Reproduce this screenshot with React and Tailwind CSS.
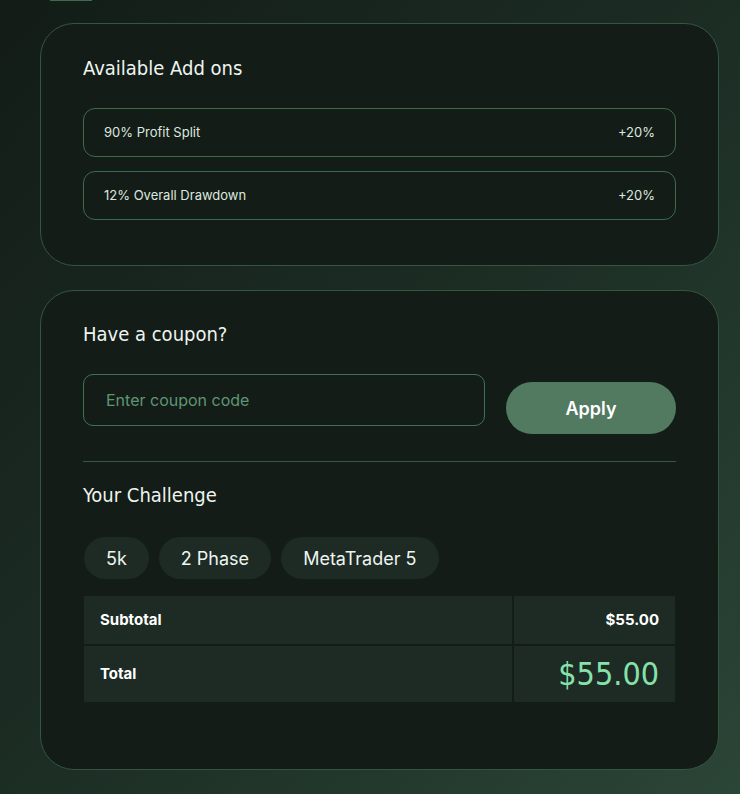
import React from 'react';

const display = { fontFamily: '"Liberation Sans Narrow", "DejaVu Sans Condensed", "Roboto", sans-serif' };
const body = { fontFamily: 'Inter, "Noto Sans", sans-serif' };

const addons = [
  { label: '90% Profit Split', value: '+20%' },
  { label: '12% Overall Drawdown', value: '+20%' },
];

const chips = ['5k', '2 Phase', 'MetaTrader 5'];

export default function App() {
  return (
    <div
      className="min-h-[794px] w-full bg-gradient-to-br from-[#131c17] via-[#1c2d24] to-[#2b4537] pl-10 pr-[21px] pb-6 text-white"
      style={body}
    >
      <div className="ml-[10px] h-px w-[42px] bg-[#3f6b4f]" />

      <div className="mt-[22px] flex flex-col gap-6">
        {/* add ons */}
        <div className="rounded-[34px] border border-[#325640] bg-[#141c18] px-[42px] pt-[30px] pb-[45px]">
          <h2 className="text-[20px] leading-[28px] text-[#eef5ef]" style={display}>Available Add ons</h2>
          <div className="mt-[26px] flex flex-col gap-[14px]">
            {addons.map(a => (
              <div key={a.label} className="flex h-[49px] items-center justify-between rounded-[12px] border border-[#3d6b4d] px-5 text-[13px] text-[#dce8df]">
                <span>{a.label}</span>
                <span>{a.value}</span>
              </div>
            ))}
          </div>
        </div>

        {/* coupon + summary */}
        <div className="rounded-[34px] border border-[#325640] bg-[#141c18] px-[42px] pt-[29px] pb-[67px]">
          <h2 className="text-[20px] leading-[28px] text-[#eef5ef]" style={display}>Have a coupon?</h2>
          <div className="mt-[26px] flex items-start gap-[21px]">
            <input
              placeholder="Enter coupon code"
              className="h-[52px] w-[402px] rounded-[10px] border border-[#3f7252] bg-transparent px-[22px] text-[16px] text-white outline-none placeholder:text-[#5e9673]"
            />
            <button className="mt-2 h-[52px] flex-1 rounded-full bg-[#527a60] text-[18px] font-semibold text-white">Apply</button>
          </div>

          <div className="mt-[27px] h-px bg-[#2f5a40]" />

          <h2 className="mt-[19px] text-[20px] leading-[28px] text-[#eef5ef]" style={display}>Your Challenge</h2>

          <div className="mt-[28px] ml-px flex gap-[10px]">
            {chips.map(c => (
              <span key={c} className="flex h-[42px] items-center rounded-full bg-[#1d2b24] px-[22px] text-[18px] text-[#eef4ef]">{c}</span>
            ))}
          </div>

          <div className="mx-px mt-[17px] grid grid-cols-[428px_1fr] gap-[2px]">
            <div className="flex h-[48px] items-center bg-[#1d2b24] px-4 text-[15px] font-bold">Subtotal</div>
            <div className="flex h-[48px] items-center justify-end bg-[#1d2b24] px-4 text-[15px] font-bold">$55.00</div>
            <div className="flex h-[56px] items-center bg-[#1d2b24] px-4 text-[15px] font-bold">Total</div>
            <div className="flex h-[56px] items-center justify-end bg-[#1d2b24] px-4 text-[32px] text-[#86e2aa]" style={display}>$55.00</div>
          </div>
        </div>
      </div>
    </div>
  );
}
